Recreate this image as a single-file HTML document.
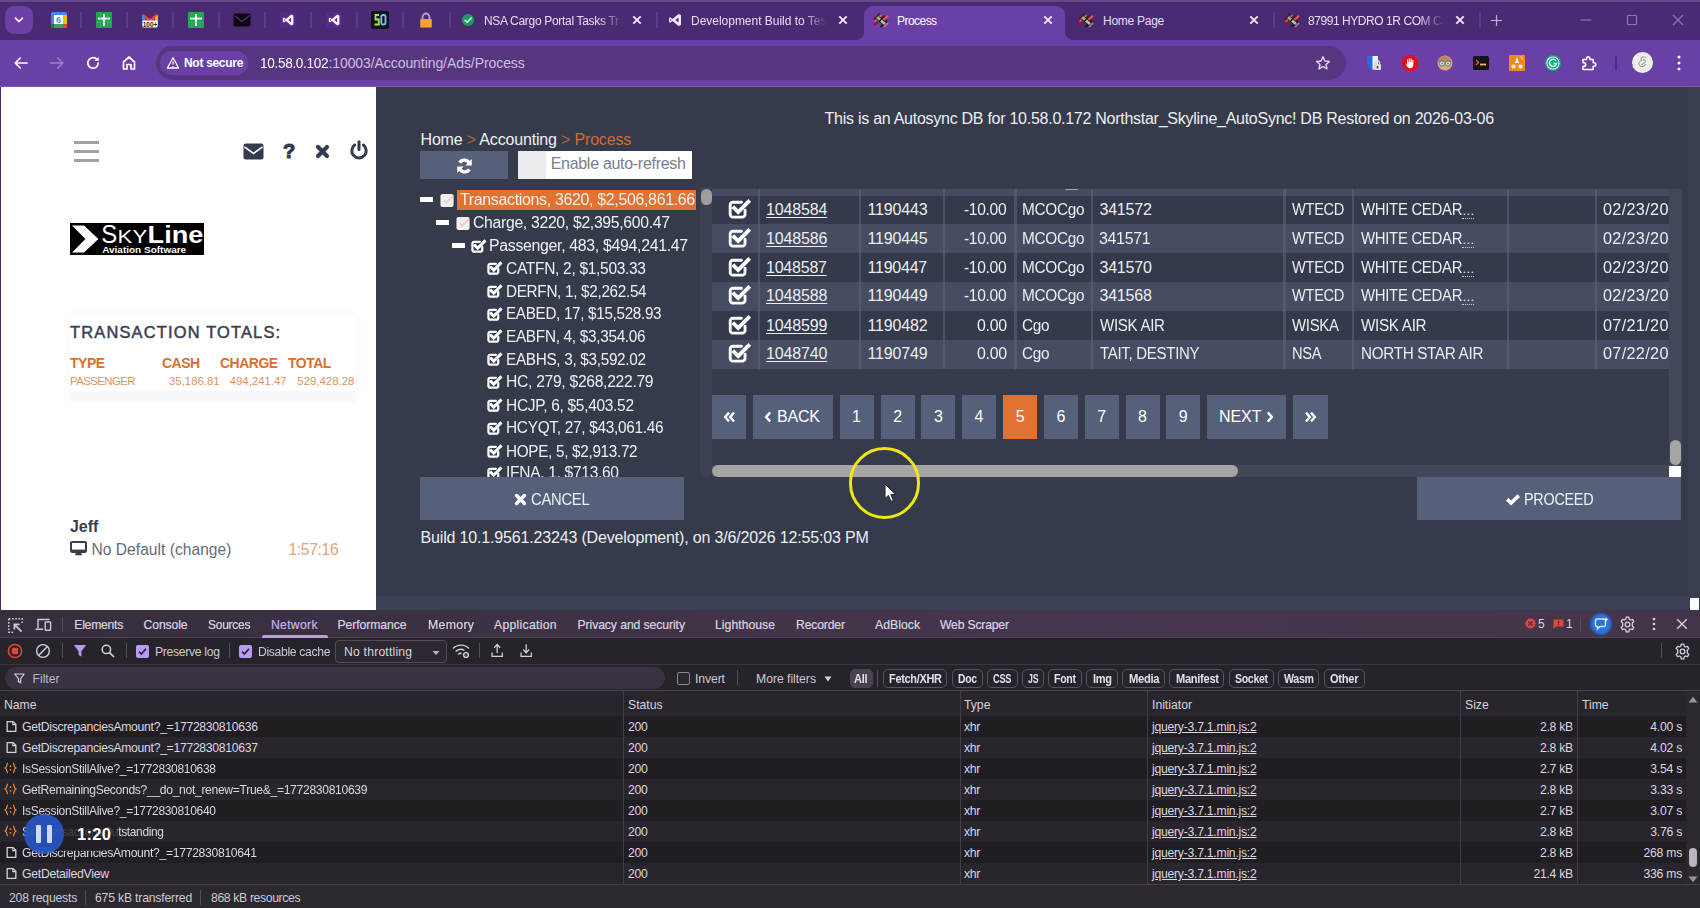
<!DOCTYPE html>
<html lang="en"><head><meta charset="utf-8"><title>Process</title>
<style>
html,body{margin:0;padding:0}
body{width:1700px;height:908px;overflow:hidden;position:relative;background:#363b4c;font-family:"Liberation Sans",sans-serif}
svg{display:block}

#tabstrip{position:absolute;left:0;top:0;width:1700px;height:40px;background:#4a2b73;}
#tabstrip:before{content:"";position:absolute;left:0;top:0;width:1700px;height:2px;background:#6f5590;opacity:.7}
.tsb{position:absolute;left:5px;top:6px;width:28px;height:28px;border-radius:9px;background:#6b3fa3;display:flex;align-items:center;justify-content:center}
.pin{position:absolute;top:11px;width:18px;height:18px}
.tsep{position:absolute;top:12px;width:2px;height:16px;background:#5d3d88;border-radius:1px}
.ttitle{position:absolute;top:13px;height:16px;line-height:16px;font-size:12px;color:#e6dcf3;white-space:nowrap;overflow:hidden}
.fade{-webkit-mask-image:linear-gradient(90deg,#000 82%,transparent 100%);mask-image:linear-gradient(90deg,#000 82%,transparent 100%)}
.tclose{position:absolute;top:15px;width:14px;height:14px}
.tclose svg{display:block}
#acttab{position:absolute;left:864px;top:6px;width:201px;height:34px;background:#6b40a6;border-radius:9px 9px 0 0}
.curveL{position:absolute;left:-9px;bottom:0;width:9px;height:9px;background:radial-gradient(circle at 0 0,transparent 9px,#6b40a6 9.5px)}
.curveR{position:absolute;right:-9px;bottom:0;width:9px;height:9px;background:radial-gradient(circle at 100% 0,transparent 9px,#6b40a6 9.5px)}
.wc{position:absolute;top:14px}
#toolbar{position:absolute;left:0;top:40px;width:1700px;height:47px;background:#6b40a6;border-bottom:0}
#toolbar:after{content:"";position:absolute;left:0;bottom:0;width:1700px;height:1px;background:#7a58b0}
.tb{position:absolute;top:14px}
#omni{position:absolute;left:156px;top:6px;width:1190px;height:34px;border-radius:17px;background:#57367f}
#chip{position:absolute;left:4px;top:5px;width:88px;height:24px;border-radius:12px;background:#6b40a6;color:#fff;font-weight:bold;font-size:12px;letter-spacing:-0.3px;line-height:24px}
#chip span{position:absolute;left:24px;top:0;white-space:nowrap}
#url{position:absolute;left:103.5px;top:8px;height:18px;line-height:18px;font-size:14px;white-space:nowrap}
.ext{position:absolute;top:14px;width:18px;height:18px}

#side{position:absolute;left:0;top:87px;width:376px;height:523px;background:#fff;border-left:1px solid #4b2d72;box-sizing:border-box}
#side > *{margin-left:-1px}
#logo{position:absolute;left:70px;top:135.6px;width:134px;height:32px;color:#fff;overflow:hidden}
#logo span{position:absolute;white-space:nowrap}
#logo .l1{left:31px;top:-4px;font-size:31px;line-height:34px;font-weight:normal;letter-spacing:-1px}
#logo .l2{left:49px;top:0px;font-size:24px;line-height:28px;letter-spacing:-1.5px}
#logo .l3{left:77px;top:-5px;font-size:31px;line-height:34px;font-weight:bold;letter-spacing:-1.4px}
#logo .l4{left:32px;top:21px;font-size:9.6px;line-height:11px;font-weight:bold;letter-spacing:-0.2px}
#totcard{position:absolute;left:70px;top:228px;width:286px;height:85px;border-radius:4px;box-shadow:0 0 9px rgba(60,60,90,.05);background:#fff}
#tt{position:absolute;left:70px;top:235px;font-size:16.4px;line-height:20px;letter-spacing:1.2px;color:#3a3f51;font-weight:normal;white-space:nowrap;-webkit-text-stroke:0.5px #3a3f51}
.th{position:absolute;top:267.5px;font-size:14px;line-height:16px;font-weight:bold;color:#d9702f;white-space:nowrap;letter-spacing:-0.5px}
.td{position:absolute;top:286.5px;font-size:11.4px;line-height:14px;color:#de935f;white-space:nowrap;letter-spacing:0}
#jeff{position:absolute;left:70px;top:429.5px;font-size:15.9px;line-height:20px;font-weight:bold;color:#363b4e}
#nodef{position:absolute;left:91.5px;top:453px;font-size:15.6px;line-height:20px;color:#666b78;white-space:nowrap;letter-spacing:0.02px}
#timer{position:absolute;left:288.4px;top:453px;font-size:15.6px;line-height:20px;color:#e2a178;white-space:nowrap;letter-spacing:-0.3px}

#main{position:absolute;left:376px;top:87px;width:1324px;height:523px;background:#363b4c;overflow:hidden;color:#eff0f3}
.t16{position:absolute;font-size:16px;line-height:20px;white-space:nowrap}
.o{color:#cc6c38}
.o2{color:#b0643c}
#refresh{position:absolute;left:44.4px;top:64px;width:88px;height:28.3px;background:#56607b;display:flex;align-items:center;justify-content:center}
#auto{position:absolute;left:142.3px;top:64px;width:174px;height:28.3px;background:#fff}
#auto .sq{position:absolute;left:0;top:0;width:28px;height:28.3px;background:#ececee}
#auto span{position:absolute;left:32.4px;top:3px;font-size:16px;line-height:20px;color:#7a7e88;white-space:nowrap}
#tree{position:absolute;left:0;top:0;width:324px;height:390.6px;overflow:hidden}
.minus{position:absolute;width:13px;height:4.4px;background:#fff}
.selbg{position:absolute;height:19.6px;background:#e07332}
#treesb{position:absolute;left:324px;top:100px;width:12px;height:290px;background:#3c4153;border-radius:0 0 6px 6px}
#treesb div{position:absolute;left:1px;top:2.4px;width:10.6px;height:16px;border-radius:5.3px;background:#9d9d9c}
#tbl{position:absolute;left:336px;top:102px;width:957px;height:179.6px;overflow:hidden;background:transparent}
.hdrsliver{position:absolute;left:0;top:0;width:957px;height:7px;background:#454c61}
.tr{position:absolute;left:0;width:957px;height:29px}
.c{position:absolute;font-size:16px;line-height:20px;white-space:nowrap;color:#eceef1}
.lnk span{text-decoration:underline;text-underline-offset:2px;text-decoration-thickness:1.2px}
.ell{font-size:13px;letter-spacing:0.4px;border-bottom:1.5px dotted #c8cad2;display:inline-block;line-height:15px}
.vl{position:absolute;top:0;width:2.2px;height:179.6px;background:rgba(98,108,136,.48)}
.pb{position:absolute;top:307.8px;height:44.5px;background:#56607b;display:flex;align-items:center;justify-content:center;font-size:16px;color:#fff}
.pb.act{background:#e07332}
#hsb{position:absolute;left:336px;top:378.4px;width:957px;height:12px;background:#42475a}
#hsb div{position:absolute;left:0;top:0;width:526px;height:12px;border-radius:6px;background:#a5a5a3}
#vsb{position:absolute;left:1292.6px;top:102px;width:13px;height:288px;background:#42475a}
#vsb .th1{position:absolute;left:1px;top:251px;width:11px;height:25px;border-radius:5.5px;background:#a5a5a3}
#vsb .corner{position:absolute;left:0.6px;top:276.5px;width:11.6px;height:11.5px;background:#fff}
.bigbtn{position:absolute;width:264px;height:43px;background:#56607b;display:flex;align-items:center;justify-content:center;font-size:16px}
#pagesb{position:absolute;left:1312px;top:0;width:12px;height:523px;background:#3a3f51}
#pagesb div{position:absolute;left:1.6px;top:511px;width:9.6px;height:12px;background:#fff}
#footerband{position:absolute;left:0;top:509px;width:1324px;height:14px;background:#3b4056}
#ring{position:absolute;left:472.5px;top:360px;width:65.8px;height:65.8px;border-radius:50%;border:3.6px solid #f0e614;box-sizing:content-box}
#cursor{position:absolute;left:507.6px;top:395.6px}

#dt{position:absolute;left:0;top:610px;width:1700px;height:298px;background:#27232a;color:#d8d3de;font-size:12px;overflow:hidden}
#dt:before{content:"";position:absolute;left:0;top:0;width:1700px;height:2px;background:linear-gradient(90deg,#362e3c 0%,#3c3143 25%,#47364f 65%,#433549 100%)}
#dtabs{position:absolute;left:0;top:1px;width:1700px;height:27px;background:linear-gradient(90deg,#362e3c 0%,#3c3143 25%,#47364f 65%,#433549 100%);border-bottom:1px solid #4d4452;box-sizing:border-box}
.dtab{position:absolute;top:6px;height:16px;line-height:16px;font-size:12.2px;color:#dbd5e2;white-space:nowrap;-webkit-text-stroke:0.2px #dbd5e2}
.dtab.on{color:#c7b1f5;-webkit-text-stroke:0.2px #c7b1f5}
#netul{position:absolute;left:262px;top:24px;width:66px;height:3px;background:#b79cf0;border-radius:2px 2px 0 0}
.dsep{position:absolute;width:1px;height:15px;background:#564d5b}
.dcnt{position:absolute;top:5px;font-size:12px;line-height:16px;color:#d8d3de}
#dbar{position:absolute;left:0;top:28px;width:1700px;height:27px;background:#27232a;border-bottom:1px solid #3c3640;box-sizing:border-box}
.dlbl{position:absolute;top:6px;height:16px;line-height:16px;font-size:12.2px;color:#cfc9d6;white-space:nowrap;letter-spacing:-0.1px}
#thr{position:absolute;left:335px;top:1.5px;width:111.5px;height:23.5px;border:1px solid #544c5a;border-radius:4px;box-sizing:border-box;background:#2c2730}
#thr span{position:absolute;left:8px;top:3.5px;line-height:16px;font-size:12.2px;color:#d8d3de;white-space:nowrap}
#dfil{position:absolute;left:0;top:55px;width:1700px;height:27px;background:#27232a;border-bottom:1px solid #3c3640;box-sizing:border-box}
#fbox{position:absolute;left:5px;top:2px;width:660px;height:22px;border-radius:11px;background:#3a3240}
#fbox span{position:absolute;left:27.5px;top:3.5px;line-height:16px;font-size:12.2px;color:#bfb8c6}
.pill{position:absolute;top:3.5px;height:19.5px;border:1px solid #5a5260;border-radius:5px;box-sizing:border-box}
.pilt{position:absolute;top:5.5px;height:16px;line-height:16px;font-size:12px;font-weight:bold;color:#e4dfe9;white-space:nowrap}
.pill.on{background:#4b4251;border-color:#4b4251}
#ghead{position:absolute;left:0;top:80px;width:1700px;height:26.6px;background:#29252c;border-top:1px solid #48424d;border-bottom:1px solid #403b45;box-sizing:border-box}
.gh{position:absolute;top:5.5px;line-height:16px;font-size:12.2px;color:#d8d3de}
.gr{position:absolute;left:0;width:1686px;height:21px}
.gc{position:absolute;top:3px;line-height:16px;font-size:12.2px;color:#dcd7e1;white-space:nowrap;letter-spacing:-0.25px}
.gc span{letter-spacing:0}
.gc.u{text-decoration:underline}
.gc.rt{text-align:right}
.gvl{position:absolute;top:81px;width:1px;height:193px;background:#433d48}
#dsb{position:absolute;left:1686px;top:82px;width:14px;height:192px;background:#2c2830}
#dsb .t{position:absolute;left:3px;top:156px;width:8px;height:19px;border-radius:4px;background:#b9b4bd}
#dstat{position:absolute;left:0;top:274px;width:1700px;height:24px;background:#2c2830;border-top:1px solid #4a434f;box-sizing:border-box}
#rec{position:absolute;left:0;top:0}
#rec .pill2{position:absolute;left:26px;top:207px;width:92px;height:34px;border-radius:17px;background:rgba(34,30,38,.82)}
#rec .pz{position:absolute;left:24px;top:204px;width:40px;height:40px;border-radius:50%;background:rgba(40,92,220,.80)}
#rec .pz i{position:absolute;top:11px;width:5px;height:18px;background:rgba(225,234,255,.9);border-radius:1px}
#rec .pz i:first-child{left:12px}
#rec .pz i:last-child{left:23px}
#rec span{position:absolute;left:77px;top:213px;font-size:16.5px;line-height:22px;font-weight:bold;color:#fff;letter-spacing:0.3px}

</style></head><body>
<div id="tabstrip">
<div class="tsb"><svg width="12" height="12" viewBox="0 0 12 12"><path d="M2.5 4.2 L6 7.6 L9.5 4.2" fill="none" stroke="#fff" stroke-width="1.7" stroke-linecap="round" stroke-linejoin="round"/></svg></div>
<div class="pin" style="left:50px"><svg width="18" height="18" viewBox="0 0 18 18"><rect x="1" y="1" width="16" height="16" rx="2" fill="#4285f4"/><rect x="13" y="4" width="4" height="10" fill="#fbbc04"/><rect x="4" y="13" width="10" height="4" fill="#34a853"/><rect x="1" y="13" width="3" height="4" fill="#188038"/><rect x="13" y="13" width="4" height="4" fill="#ea4335"/><rect x="4" y="4" width="9" height="9" fill="#fff"/><text x="8.5" y="12" font-family="Liberation Sans, sans-serif" font-size="9" font-weight="bold" fill="#4285f4" text-anchor="middle">6</text></svg></div>
<div class="pin" style="left:95px"><svg width="18" height="18" viewBox="0 0 18 18"><rect x="1" y="1" width="16" height="16" rx="1" fill="#23a455"/><rect x="8" y="3" width="1.9" height="12" fill="#fff"/><rect x="3" y="6.6" width="12" height="1.9" fill="#fff"/><path d="M1 11.5 H17 M5 1 V17 M13 1 V17" stroke="#3fb56c" stroke-width="0.6"/></svg></div>
<div class="tsep" style="left:80px"></div>
<div class="pin" style="left:141px"><svg width="18" height="18" viewBox="0 0 18 18"><path d="M1 4 L1 15 L4 15 L4 8 L9 11.5 L14 8 L14 15 L17 15 L17 4 L15.5 3 L9 7.8 L2.5 3 Z" fill="#ea4335"/><path d="M1 4 L1 15 L4 15 L4 6.2Z" fill="#4285f4"/><path d="M17 4 L17 15 L14 15 L14 6.2Z" fill="#fbbc04"/><rect x="1.5" y="9.5" width="15" height="7" rx="1" fill="#fff"/><text x="9" y="15.5" font-family="Liberation Sans, sans-serif" font-size="6.5" font-weight="bold" fill="#222" text-anchor="middle">100+</text></svg></div>
<div class="tsep" style="left:126px"></div>
<div class="pin" style="left:187px"><svg width="18" height="18" viewBox="0 0 18 18"><rect x="1" y="1" width="16" height="16" rx="1" fill="#23a455"/><rect x="8" y="3" width="1.9" height="12" fill="#fff"/><rect x="3" y="6.6" width="12" height="1.9" fill="#fff"/><path d="M1 11.5 H17 M5 1 V17 M13 1 V17" stroke="#3fb56c" stroke-width="0.6"/></svg></div>
<div class="tsep" style="left:172px"></div>
<div class="pin" style="left:233px"><svg width="18" height="18" viewBox="0 0 18 18"><rect x="0.5" y="2.5" width="17" height="13" rx="1.5" fill="#0b0710"/><path d="M1.5 4.5 L9 10.5 L16.5 4.5" fill="none" stroke="#4a2c72" stroke-width="1.6"/></svg></div>
<div class="tsep" style="left:218px"></div>
<div class="pin" style="left:279px"><svg width="18" height="18" viewBox="0 0 18 18"><rect x="1" y="1" width="16" height="16" rx="2" fill="#5e2a96" opacity="0.75"/><path d="M12.2 3.6 L14.4 4.6 L14.4 13.4 L12.2 14.4 L6.9 9.9 L5 11.5 L3.8 10.8 L3.8 7.2 L5 6.5 L6.9 8.1 Z M12.1 6.7 L9.3 9 L12.1 11.3 Z M5 7.9 L5 10.1 L6.1 9 Z" fill="#fbf3ff" fill-rule="evenodd"/></svg></div>
<div class="tsep" style="left:264px"></div>
<div class="pin" style="left:325px"><svg width="18" height="18" viewBox="0 0 18 18"><rect x="1" y="1" width="16" height="16" rx="2" fill="#5e2a96" opacity="0.75"/><path d="M12.2 3.6 L14.4 4.6 L14.4 13.4 L12.2 14.4 L6.9 9.9 L5 11.5 L3.8 10.8 L3.8 7.2 L5 6.5 L6.9 8.1 Z M12.1 6.7 L9.3 9 L12.1 11.3 Z M5 7.9 L5 10.1 L6.1 9 Z" fill="#fbf3ff" fill-rule="evenodd"/></svg></div>
<div class="tsep" style="left:310px"></div>
<div class="pin" style="left:371px"><svg width="18" height="18" viewBox="0 0 18 18"><rect x="0" y="0" width="18" height="18" rx="2" fill="#10141c"/><path d="M8 4 L4.5 4 L4.5 8.5 L7.8 8.5 L7.8 13.5 L3.5 13.5" fill="none" stroke="#b5e04a" stroke-width="1.8"/><rect x="10.3" y="4" width="4.2" height="9.5" rx="1.5" fill="none" stroke="#6ec6e8" stroke-width="1.8"/></svg></div>
<div class="tsep" style="left:356px"></div>
<div class="pin" style="left:417px"><svg width="18" height="18" viewBox="0 0 18 18"><path d="M5.5 8 L5.5 6 A3.5 3.5 0 0 1 12.5 6 L12.5 8" fill="none" stroke="#b3a1dc" stroke-width="1.8"/><rect x="3.2" y="8" width="11.6" height="8.6" rx="0.8" fill="#f9a22b"/></svg></div>
<div class="tsep" style="left:402px"></div>
<div class="tsep" style="left:449px"></div>
<div class="pin" style="left:459px"><svg width="18" height="18" viewBox="0 0 18 18"><circle cx="9" cy="9" r="6.1" fill="#1f9a62"/><path d="M6 9.2 L8.2 11.3 L12.2 7" fill="none" stroke="#d8f5e6" stroke-width="1.6" stroke-linecap="round" stroke-linejoin="round"/></svg></div>
<div class="ttitle fade" style="left:484px;width:140px;letter-spacing:-0.31px">NSA Cargo Portal Tasks Tr</div>
<div class="tclose" style="left:632px"><svg width="10" height="10" viewBox="0 0 10 10"><path d="M1.3 1.3 L8.7 8.7 M8.7 1.3 L1.3 8.7" stroke="#efe8f8" stroke-width="1.9" fill="none"/></svg></div>
<div class="tsep" style="left:656px"></div>
<div class="pin" style="left:666px"><svg width="18" height="18" viewBox="0 0 18 18"><path d="M12.6 3 L15 4 L15 14 L12.6 15 L6.5 9.9 L4.3 11.7 L3 11 L3 7 L4.3 6.3 L6.5 8.1 Z M12.5 6.4 L9.2 9 L12.5 11.6 Z M4.3 7.8 L4.3 10.2 L5.6 9 Z" fill="#f4eaff" fill-rule="evenodd"/></svg></div>
<div class="ttitle fade" style="left:691px;width:136px;letter-spacing:-0.02px">Development Build to Tes</div>
<div class="tclose" style="left:838px"><svg width="10" height="10" viewBox="0 0 10 10"><path d="M1.3 1.3 L8.7 8.7 M8.7 1.3 L1.3 8.7" stroke="#efe8f8" stroke-width="1.9" fill="none"/></svg></div>
<div id="acttab"><div class="curveL"></div><div class="curveR"></div></div>
<div class="pin" style="left:872px"><svg width="18" height="18" viewBox="0 0 18 18"><g stroke-linecap="butt" fill="none"><path d="M2 8.5 L8 2.5" stroke="#5e1038" stroke-width="2"/><path d="M2.5 11 L9.5 4" stroke="#e2584c" stroke-width="1.8"/><path d="M2.5 14 L6 10.5" stroke="#8c1436" stroke-width="2.4"/><path d="M8.5 9 L13 4.5" stroke="#5a0c34" stroke-width="2.2"/><path d="M10.5 9.5 L16 4.8" stroke="#ee5a4a" stroke-width="2"/><path d="M8.5 16 L15 9.5" stroke="#3c0a3a" stroke-width="2"/><path d="M12 16 L16 12" stroke="#c27a80" stroke-width="1.6"/><path d="M5.5 6.5 L13.2 13.2" stroke="#1c1414" stroke-width="4.2"/><path d="M5.2 6.2 L8 8.6" stroke="#7cc47e" stroke-width="3"/><path d="M9 9.6 L13 13" stroke="#a4c890" stroke-width="2.8"/></g></svg></div>
<div class="ttitle" style="left:897px;color:#fff;letter-spacing:-0.54px">Process</div>
<div class="tclose" style="left:1043px"><svg width="10" height="10" viewBox="0 0 10 10"><path d="M1.3 1.3 L8.7 8.7 M8.7 1.3 L1.3 8.7" stroke="#efe8f8" stroke-width="1.9" fill="none"/></svg></div>
<div class="pin" style="left:1077px"><svg width="18" height="18" viewBox="0 0 18 18"><g stroke-linecap="butt" fill="none"><path d="M2 8.5 L8 2.5" stroke="#5e1038" stroke-width="2"/><path d="M2.5 11 L9.5 4" stroke="#e2584c" stroke-width="1.8"/><path d="M2.5 14 L6 10.5" stroke="#8c1436" stroke-width="2.4"/><path d="M8.5 9 L13 4.5" stroke="#5a0c34" stroke-width="2.2"/><path d="M10.5 9.5 L16 4.8" stroke="#ee5a4a" stroke-width="2"/><path d="M8.5 16 L15 9.5" stroke="#3c0a3a" stroke-width="2"/><path d="M12 16 L16 12" stroke="#c27a80" stroke-width="1.6"/><path d="M5.5 6.5 L13.2 13.2" stroke="#1c1414" stroke-width="4.2"/><path d="M5.2 6.2 L8 8.6" stroke="#7cc47e" stroke-width="3"/><path d="M9 9.6 L13 13" stroke="#a4c890" stroke-width="2.8"/></g></svg></div>
<div class="ttitle" style="left:1103px;letter-spacing:-0.26px">Home Page</div>
<div class="tclose" style="left:1249px"><svg width="10" height="10" viewBox="0 0 10 10"><path d="M1.3 1.3 L8.7 8.7 M8.7 1.3 L1.3 8.7" stroke="#efe8f8" stroke-width="1.9" fill="none"/></svg></div>
<div class="tsep" style="left:1273px"></div>
<div class="pin" style="left:1283px"><svg width="18" height="18" viewBox="0 0 18 18"><g stroke-linecap="butt" fill="none"><path d="M2 8.5 L8 2.5" stroke="#5e1038" stroke-width="2"/><path d="M2.5 11 L9.5 4" stroke="#e2584c" stroke-width="1.8"/><path d="M2.5 14 L6 10.5" stroke="#8c1436" stroke-width="2.4"/><path d="M8.5 9 L13 4.5" stroke="#5a0c34" stroke-width="2.2"/><path d="M10.5 9.5 L16 4.8" stroke="#ee5a4a" stroke-width="2"/><path d="M8.5 16 L15 9.5" stroke="#3c0a3a" stroke-width="2"/><path d="M12 16 L16 12" stroke="#c27a80" stroke-width="1.6"/><path d="M5.5 6.5 L13.2 13.2" stroke="#1c1414" stroke-width="4.2"/><path d="M5.2 6.2 L8 8.6" stroke="#7cc47e" stroke-width="3"/><path d="M9 9.6 L13 13" stroke="#a4c890" stroke-width="2.8"/></g></svg></div>
<div class="ttitle fade" style="left:1308px;width:136px;letter-spacing:-0.44px">87991 HYDRO 1R COM CA</div>
<div class="tclose" style="left:1455px"><svg width="10" height="10" viewBox="0 0 10 10"><path d="M1.3 1.3 L8.7 8.7 M8.7 1.3 L1.3 8.7" stroke="#efe8f8" stroke-width="1.9" fill="none"/></svg></div>
<div class="tsep" style="left:1479px"></div>
<div class="tclose" style="left:1490px;top:13.5px"><svg width="13" height="13" viewBox="0 0 13 13"><path d="M6.5 1 V12 M1 6.5 H12" stroke="#bfaedb" stroke-width="1.2" fill="none"/></svg></div>
<svg class="wc" style="left:1580px" width="12" height="12" viewBox="0 0 12 12"><path d="M0.5 6 H11.5" stroke="#8c75b3" stroke-width="1.2"/></svg>
<svg class="wc" style="left:1626px" width="12" height="12" viewBox="0 0 12 12"><rect x="1.5" y="1.5" width="9" height="9" rx="1" fill="none" stroke="#8c75b3" stroke-width="1.2"/></svg>
<svg class="wc" style="left:1672px" width="12" height="12" viewBox="0 0 12 12"><path d="M1 1 L11 11 M11 1 L1 11" stroke="#8c75b3" stroke-width="1.2"/></svg>
</div>
<div id="toolbar">
<svg class="tb" style="left:12px" width="18" height="18" viewBox="0 0 18 18"><path d="M15 9 H3.5 M8.2 4 L3.2 9 L8.2 14" fill="none" stroke="#fff" stroke-width="1.7" stroke-linecap="round" stroke-linejoin="round"/></svg>
<svg class="tb" style="left:48px" width="18" height="18" viewBox="0 0 18 18"><path d="M3 9 H14.5 M9.8 4 L14.8 9 L9.8 14" fill="none" stroke="#9a7fcb" stroke-width="1.7" stroke-linecap="round" stroke-linejoin="round"/></svg>
<svg class="tb" style="left:84px" width="18" height="18" viewBox="0 0 18 18"><path d="M14.2 9 A5.2 5.2 0 1 1 12.4 5.0" fill="none" stroke="#fff" stroke-width="1.7" stroke-linecap="round"/><path d="M14.6 2.8 V7 H10.4 Z" fill="#fff"/></svg>
<svg class="tb" style="left:120px" width="18" height="18" viewBox="0 0 18 18"><path d="M3.5 8 L9 3 L14.5 8 V15 H11 V10.5 H7 V15 H3.5 Z" fill="none" stroke="#fff" stroke-width="1.7" stroke-linejoin="round"/></svg>
<div id="omni"><div id="chip"><svg width="14" height="14" viewBox="0 0 14 14" style="position:absolute;left:5.5px;top:5px"><path d="M7 1.8 L12.6 12 H1.4 Z" fill="none" stroke="#fff" stroke-width="1.3" stroke-linejoin="round"/><path d="M7 5.5 V8.6 M7 10 V11" stroke="#fff" stroke-width="1.2"/></svg><span>Not secure</span></div>
<div id="url"><span id="f_host" style="position:absolute;left:0;top:0;color:#fff;letter-spacing:-0.320px;display:inline-block;transform-origin:0 50%;transform:scaleX(0.9694);">10.58.0.102</span><span id="f_path" style="position:absolute;left:68.9px;top:0;color:#cdbfe3;letter-spacing:-0.074px;">:10003/Accounting/Ads/Process</span></div>
<svg style="position:absolute;left:1159px;top:9px" width="16" height="16" viewBox="0 0 16 16"><path d="M8 1.8 L9.9 6 L14.4 6.4 L11 9.4 L12 13.9 L8 11.5 L4 13.9 L5 9.4 L1.6 6.4 L6.1 6 Z" fill="none" stroke="#e6dcf5" stroke-width="1.4" stroke-linejoin="round"/></svg>
</div>
<div class="ext" style="left:1365px"><svg width="18" height="18" viewBox="0 0 18 18"><path d="M2 2 H13 V9 C13 13 8 16 7.5 16 C7 16 2 13 2 9 Z" fill="#2a6bd8"/><path d="M7.5 2 H13 V9 C13 13 8 16 7.5 16 Z" fill="#e8f0fe"/><rect x="9" y="10" width="7" height="6" rx="1" fill="#ddd"/><path d="M10.5 10 V8.6 A2 2 0 0 1 14.5 8.6 V10" stroke="#ddd" stroke-width="1.3" fill="none"/><rect x="11.7" y="12" width="1.6" height="2.2" fill="#444"/></svg></div>
<div class="ext" style="left:1401px"><svg width="18" height="18" viewBox="0 0 18 18"><path d="M5.6 1 H12.4 L17 5.6 V12.4 L12.4 17 H5.6 L1 12.4 V5.6 Z" fill="#e0101a"/><path d="M6 9 V5.5 H7.2 V8 H7.8 V4.3 H9 V8 H9.6 V4.8 H10.8 V8.3 H11.3 V6 H12.4 V10.5 C12.4 13 11 14.3 9 14.3 C7 14.3 6.3 13 5 10.5 L5.8 10 Z" fill="#fff"/></svg></div>
<div class="ext" style="left:1436px"><svg width="18" height="18" viewBox="0 0 18 18"><circle cx="9" cy="9" r="7.5" fill="#d9a87a"/><path d="M1.6 8 A7.5 7.5 0 0 1 16.4 8 Z" fill="#b98a5e"/><circle cx="6" cy="9.5" r="2.6" fill="#e8e3d8" stroke="#5a6b78" stroke-width="0.9"/><circle cx="12" cy="9.5" r="2.6" fill="#e8e3d8" stroke="#5a6b78" stroke-width="0.9"/><circle cx="6" cy="9.5" r="1" fill="#6d8a5b"/><circle cx="12" cy="9.5" r="1" fill="#6d8a5b"/></svg></div>
<div class="ext" style="left:1472px"><svg width="18" height="18" viewBox="0 0 18 18"><rect x="1" y="2" width="16" height="14" rx="1.5" fill="#15121a"/><path d="M4 6 L6.5 8.5 L4 11" stroke="#e25b3b" stroke-width="1.4" fill="none"/><rect x="8" y="9.6" width="6" height="1.8" fill="#f2b84b"/></svg></div>
<div class="ext" style="left:1508px"><svg width="18" height="18" viewBox="0 0 18 18"><rect x="1" y="1" width="16" height="16" rx="1" fill="#f08a1c"/><path d="M9 3 L11 9 H7 Z" fill="#fff"/><circle cx="5.5" cy="12.5" r="2" fill="#fff"/><circle cx="12.5" cy="12.5" r="2" fill="#fff"/><path d="M12 2 L16 8 L14 3 Z" fill="#ffd9a8"/></svg></div>
<div class="ext" style="left:1544px"><svg width="18" height="18" viewBox="0 0 18 18"><circle cx="9" cy="9" r="8" fill="#11a683"/><circle cx="9" cy="9" r="6.6" fill="#fff"/><circle cx="9" cy="9" r="5.7" fill="#11a683"/><path d="M12.2 7 A3.6 3.6 0 1 0 12.6 9.4 H9.6" stroke="#fff" stroke-width="1.5" fill="none"/></svg></div>
<div class="ext" style="left:1580px"><svg width="18" height="18" viewBox="0 0 18 18"><path d="M3 5.5 H6.5 V4.6 A1.7 1.7 0 0 1 9.9 4.6 V5.5 H13.2 V8.8 H14.1 A1.7 1.7 0 0 1 14.1 12.2 H13.2 V15.5 H3 V12.4 H3.9 A1.8 1.8 0 0 0 3.9 8.8 H3 Z" fill="none" stroke="#fff" stroke-width="1.6" stroke-linejoin="round"/></svg></div>
<div style="position:absolute;left:1615px;top:15px;width:2px;height:16px;background:#4f2f86;border-radius:1px"></div>
<div style="position:absolute;left:1632px;top:12px;width:21px;height:21px;border-radius:50%;background:#f0eeec"><svg width="21" height="21" viewBox="0 0 21 21"><path d="M13.5 5.5 C11 4 8 6 9.5 8.5 C6 9 6 14 9.5 14.5 C12 15 13 13 13.5 12 M11 8 C13 7.5 14.5 9 13 10.5 C12 11.5 10 11 10 13" stroke="#7a8f7a" stroke-width="1" fill="none"/></svg></div>
<svg style="position:absolute;left:1676px;top:14px" width="6" height="18" viewBox="0 0 6 18"><circle cx="3" cy="3" r="1.5" fill="#fff"/><circle cx="3" cy="9" r="1.5" fill="#fff"/><circle cx="3" cy="15" r="1.5" fill="#fff"/></svg>
</div>
<div id="side">
<div style="position:absolute;left:74px;top:54px;width:25px;height:3.4px;background:#9fa0a9"></div>
<div style="position:absolute;left:74px;top:63px;width:25px;height:3.4px;background:#9fa0a9"></div>
<div style="position:absolute;left:74px;top:72px;width:25px;height:3.4px;background:#9fa0a9"></div>
<svg style="position:absolute;left:243px;top:56px" width="21" height="17" viewBox="0 0 22 18" preserveAspectRatio="none"><rect x="0.5" y="0.5" width="21" height="17" rx="2.5" fill="#363b4e"/><path d="M1.5 4.2 L11 11 L20.5 4.2" fill="none" stroke="#fff" stroke-width="1.7"/></svg>
<div style="position:absolute;left:281px;top:53px;width:16px;text-align:center;font-weight:bold;font-size:20px;line-height:22px;color:#363b4e;-webkit-text-stroke:1.1px #363b4e">?</div>
<svg style="position:absolute;left:315px;top:57px" width="15" height="15" viewBox="0 0 15 15"><path d="M3 3 L12 12 M12 3 L3 12" stroke="#363b4e" stroke-width="4.2" stroke-linecap="round"/></svg>
<svg style="position:absolute;left:349px;top:53px" width="20" height="20" viewBox="0 0 20 20"><path d="M5.6 5 A7.2 7.2 0 1 0 14.4 5" fill="none" stroke="#363b4e" stroke-width="3" stroke-linecap="round"/><path d="M10 1.8 V9.4" stroke="#363b4e" stroke-width="3" stroke-linecap="round"/></svg>
<div id="logo"><svg width="134" height="32" viewBox="0 0 134 32" style="position:absolute;left:0;top:0"><rect width="134" height="32" fill="#000"/><path d="M2 2.6 L14 2.6 L28.4 16 L14 29.4 L2 29.4 L15.4 16 Z" fill="#fff"/><g fill="#fff" font-family="Liberation Sans, sans-serif"><text x="31.2" y="20.1" font-size="25.5" textLength="16" lengthAdjust="spacingAndGlyphs">S</text><text x="47.6" y="20.1" font-size="18" textLength="29.6" lengthAdjust="spacingAndGlyphs">KY</text><text x="77.6" y="20.1" font-size="24" font-weight="bold" textLength="55.8" lengthAdjust="spacingAndGlyphs">Line</text><text x="32.2" y="29.6" font-size="8.2" font-weight="bold" textLength="84" lengthAdjust="spacingAndGlyphs">Aviation Software</text></g></svg></div>
<div id="totcard"></div><div style="position:absolute;left:70px;top:303.5px;width:286px;height:10px;background:#f8f8fa;border-radius:0 0 4px 4px"></div>
<div id="tt">TRANSACTION TOTALS:</div>
<div class="th" style="left:70px">TYPE</div><div class="th" style="left:162px">CASH</div><div class="th" style="left:220px">CHARGE</div><div class="th" style="left:288px">TOTAL</div>
<div class="td" style="left:70px;letter-spacing:-0.57px">PASSENGER</div><div class="td" style="left:169px">35,186.81</div><div class="td" style="left:229.7px">494,241.47</div><div class="td" style="left:297.3px">529,428.28</div>
<div id="jeff">Jeff</div>
<svg style="position:absolute;left:70px;top:454px" width="17" height="15" viewBox="0 0 17 15"><rect x="1" y="1" width="15" height="10" rx="1.2" fill="none" stroke="#363b4e" stroke-width="2"/><rect x="1" y="8.6" width="15" height="2.4" fill="#363b4e"/><path d="M5 14.2 H12 L11 11 H6 Z" fill="#363b4e"/></svg>
<div id="nodef">No Default (change)</div>
<div id="timer">1:57:16</div>
</div>
<div id="main">
<div id="f_notice" class="t16" style="left:448.6px;top:22.0px;letter-spacing:-0.266px;color:#eceef1">This is an Autosync DB for 10.58.0.172 Northstar_Skyline_AutoSync! DB Restored on 2026-03-06</div>
<div id="f_crumb" class="t16" style="left:44.5px;top:42.5px;letter-spacing:-0.174px;">Home <span class="o2">&gt;</span> Accounting <span class="o2">&gt;</span><span class="o"> Process</span></div>
<div id="refresh"><svg width="17" height="16" viewBox="0 0 17 16" style="margin-top:1px"><path d="M13.8 6.4 A5.7 5.7 0 0 0 3.6 4.6 M3.2 9.6 A5.7 5.7 0 0 0 13.4 11.4" fill="none" stroke="#fff" stroke-width="3.3"/><path d="M15.8 1 V7.4 H9.4 Z M1.2 15 V8.6 H7.6 Z" fill="#fff"/></svg></div>
<div id="auto"><div class="sq"></div><span id="f_auto" style="letter-spacing:-0.296px;">Enable auto-refresh</span></div>
<div id="tree">
<div class="minus" style="left:43.6px;top:110.2px"></div>
<div style="position:absolute;left:63.5px;top:105.8px"><svg width="14.5" height="14.5" viewBox="0 0 16 16" style="display:block"><rect x="0.5" y="1" width="14.5" height="14.5" rx="2.4" fill="#f3f0ef"/><path d="M4.2 8 L7 10.8 L14 3.4" fill="none" stroke="#e6d3cb" stroke-width="2.2"/></svg></div>
<div class="selbg" style="left:81.2px;top:103.3px;width:239.0px"></div>
<div id="f_tree0" class="t16" style="left:83.8px;top:103.1px;letter-spacing:-0.320px;display:inline-block;transform-origin:0 50%;transform:scaleX(0.9947);">Transactions, 3620, $2,506,861.66</div>
<div class="minus" style="left:59.6px;top:133.2px"></div>
<div style="position:absolute;left:79.5px;top:128.8px"><svg width="14.5" height="14.5" viewBox="0 0 16 16" style="display:block"><rect x="0.5" y="1" width="14.5" height="14.5" rx="2.4" fill="#f3f0ef"/><path d="M4.2 8 L7 10.8 L14 3.4" fill="none" stroke="#e6d3cb" stroke-width="2.2"/></svg></div>
<div id="f_tree1" class="t16" style="left:97.0px;top:126.1px;letter-spacing:-0.320px;display:inline-block;transform-origin:0 50%;transform:scaleX(0.9857);">Charge, 3220, $2,395,600.47</div>
<div class="minus" style="left:75.6px;top:156.2px"></div>
<div style="position:absolute;left:94.9px;top:151.6px"><svg width="14.5" height="14.5" viewBox="0 0 16 16" style="display:block;overflow:visible"><path d="M12.4 8.8 V12 A1.9 1.9 0 0 1 10.5 13.9 H3.5 A1.9 1.9 0 0 1 1.6 12 V5 A1.9 1.9 0 0 1 3.5 3.1 H9.8" fill="none" stroke="#fff" stroke-width="2.5" stroke-linecap="round"/><path d="M4.5 7.3 L7.4 10.2 L14.8 2.7" fill="none" stroke="#fff" stroke-width="3.3" stroke-linecap="square" stroke-linejoin="miter"/></svg></div>
<div id="f_tree2" class="t16" style="left:113.3px;top:149.1px;letter-spacing:-0.320px;display:inline-block;transform-origin:0 50%;transform:scaleX(0.9918);">Passenger, 483, $494,241.47</div>
<div style="position:absolute;left:110.9px;top:174.2px"><svg width="14.5" height="14.5" viewBox="0 0 16 16" style="display:block;overflow:visible"><path d="M12.4 8.8 V12 A1.9 1.9 0 0 1 10.5 13.9 H3.5 A1.9 1.9 0 0 1 1.6 12 V5 A1.9 1.9 0 0 1 3.5 3.1 H9.8" fill="none" stroke="#fff" stroke-width="2.5" stroke-linecap="round"/><path d="M4.5 7.3 L7.4 10.2 L14.8 2.7" fill="none" stroke="#fff" stroke-width="3.3" stroke-linecap="square" stroke-linejoin="miter"/></svg></div>
<div id="f_tree3" class="t16" style="left:129.6px;top:171.7px;letter-spacing:-0.320px;display:inline-block;transform-origin:0 50%;transform:scaleX(0.9706);">CATFN, 2, $1,503.33</div>
<div style="position:absolute;left:110.9px;top:197.2px"><svg width="14.5" height="14.5" viewBox="0 0 16 16" style="display:block;overflow:visible"><path d="M12.4 8.8 V12 A1.9 1.9 0 0 1 10.5 13.9 H3.5 A1.9 1.9 0 0 1 1.6 12 V5 A1.9 1.9 0 0 1 3.5 3.1 H9.8" fill="none" stroke="#fff" stroke-width="2.5" stroke-linecap="round"/><path d="M4.5 7.3 L7.4 10.2 L14.8 2.7" fill="none" stroke="#fff" stroke-width="3.3" stroke-linecap="square" stroke-linejoin="miter"/></svg></div>
<div id="f_tree4" class="t16" style="left:130.0px;top:194.7px;letter-spacing:-0.320px;display:inline-block;transform-origin:0 50%;transform:scaleX(0.9551);">DERFN, 1, $2,262.54</div>
<div style="position:absolute;left:110.9px;top:219.7px"><svg width="14.5" height="14.5" viewBox="0 0 16 16" style="display:block;overflow:visible"><path d="M12.4 8.8 V12 A1.9 1.9 0 0 1 10.5 13.9 H3.5 A1.9 1.9 0 0 1 1.6 12 V5 A1.9 1.9 0 0 1 3.5 3.1 H9.8" fill="none" stroke="#fff" stroke-width="2.5" stroke-linecap="round"/><path d="M4.5 7.3 L7.4 10.2 L14.8 2.7" fill="none" stroke="#fff" stroke-width="3.3" stroke-linecap="square" stroke-linejoin="miter"/></svg></div>
<div id="f_tree5" class="t16" style="left:130.0px;top:217.2px;letter-spacing:-0.320px;display:inline-block;transform-origin:0 50%;transform:scaleX(0.9516);">EABED, 17, $15,528.93</div>
<div style="position:absolute;left:110.9px;top:242.1px"><svg width="14.5" height="14.5" viewBox="0 0 16 16" style="display:block;overflow:visible"><path d="M12.4 8.8 V12 A1.9 1.9 0 0 1 10.5 13.9 H3.5 A1.9 1.9 0 0 1 1.6 12 V5 A1.9 1.9 0 0 1 3.5 3.1 H9.8" fill="none" stroke="#fff" stroke-width="2.5" stroke-linecap="round"/><path d="M4.5 7.3 L7.4 10.2 L14.8 2.7" fill="none" stroke="#fff" stroke-width="3.3" stroke-linecap="square" stroke-linejoin="miter"/></svg></div>
<div id="f_tree6" class="t16" style="left:130.0px;top:239.6px;letter-spacing:-0.320px;display:inline-block;transform-origin:0 50%;transform:scaleX(0.9598);">EABFN, 4, $3,354.06</div>
<div style="position:absolute;left:110.9px;top:265.2px"><svg width="14.5" height="14.5" viewBox="0 0 16 16" style="display:block;overflow:visible"><path d="M12.4 8.8 V12 A1.9 1.9 0 0 1 10.5 13.9 H3.5 A1.9 1.9 0 0 1 1.6 12 V5 A1.9 1.9 0 0 1 3.5 3.1 H9.8" fill="none" stroke="#fff" stroke-width="2.5" stroke-linecap="round"/><path d="M4.5 7.3 L7.4 10.2 L14.8 2.7" fill="none" stroke="#fff" stroke-width="3.3" stroke-linecap="square" stroke-linejoin="miter"/></svg></div>
<div id="f_tree7" class="t16" style="left:130.0px;top:262.7px;letter-spacing:-0.320px;display:inline-block;transform-origin:0 50%;transform:scaleX(0.9566);">EABHS, 3, $3,592.02</div>
<div style="position:absolute;left:110.9px;top:287.9px"><svg width="14.5" height="14.5" viewBox="0 0 16 16" style="display:block;overflow:visible"><path d="M12.4 8.8 V12 A1.9 1.9 0 0 1 10.5 13.9 H3.5 A1.9 1.9 0 0 1 1.6 12 V5 A1.9 1.9 0 0 1 3.5 3.1 H9.8" fill="none" stroke="#fff" stroke-width="2.5" stroke-linecap="round"/><path d="M4.5 7.3 L7.4 10.2 L14.8 2.7" fill="none" stroke="#fff" stroke-width="3.3" stroke-linecap="square" stroke-linejoin="miter"/></svg></div>
<div id="f_tree8" class="t16" style="left:130.0px;top:285.4px;letter-spacing:-0.320px;display:inline-block;transform-origin:0 50%;transform:scaleX(0.9808);">HC, 279, $268,222.79</div>
<div style="position:absolute;left:110.9px;top:311.1px"><svg width="14.5" height="14.5" viewBox="0 0 16 16" style="display:block;overflow:visible"><path d="M12.4 8.8 V12 A1.9 1.9 0 0 1 10.5 13.9 H3.5 A1.9 1.9 0 0 1 1.6 12 V5 A1.9 1.9 0 0 1 3.5 3.1 H9.8" fill="none" stroke="#fff" stroke-width="2.5" stroke-linecap="round"/><path d="M4.5 7.3 L7.4 10.2 L14.8 2.7" fill="none" stroke="#fff" stroke-width="3.3" stroke-linecap="square" stroke-linejoin="miter"/></svg></div>
<div id="f_tree9" class="t16" style="left:130.0px;top:308.6px;letter-spacing:-0.320px;display:inline-block;transform-origin:0 50%;transform:scaleX(0.9687);">HCJP, 6, $5,403.52</div>
<div style="position:absolute;left:110.9px;top:333.7px"><svg width="14.5" height="14.5" viewBox="0 0 16 16" style="display:block;overflow:visible"><path d="M12.4 8.8 V12 A1.9 1.9 0 0 1 10.5 13.9 H3.5 A1.9 1.9 0 0 1 1.6 12 V5 A1.9 1.9 0 0 1 3.5 3.1 H9.8" fill="none" stroke="#fff" stroke-width="2.5" stroke-linecap="round"/><path d="M4.5 7.3 L7.4 10.2 L14.8 2.7" fill="none" stroke="#fff" stroke-width="3.3" stroke-linecap="square" stroke-linejoin="miter"/></svg></div>
<div id="f_tree10" class="t16" style="left:130.0px;top:331.2px;letter-spacing:-0.320px;display:inline-block;transform-origin:0 50%;transform:scaleX(0.9640);">HCYQT, 27, $43,061.46</div>
<div style="position:absolute;left:110.9px;top:357.1px"><svg width="14.5" height="14.5" viewBox="0 0 16 16" style="display:block;overflow:visible"><path d="M12.4 8.8 V12 A1.9 1.9 0 0 1 10.5 13.9 H3.5 A1.9 1.9 0 0 1 1.6 12 V5 A1.9 1.9 0 0 1 3.5 3.1 H9.8" fill="none" stroke="#fff" stroke-width="2.5" stroke-linecap="round"/><path d="M4.5 7.3 L7.4 10.2 L14.8 2.7" fill="none" stroke="#fff" stroke-width="3.3" stroke-linecap="square" stroke-linejoin="miter"/></svg></div>
<div id="f_tree11" class="t16" style="left:130.0px;top:354.6px;letter-spacing:-0.320px;display:inline-block;transform-origin:0 50%;transform:scaleX(0.9553);">HOPE, 5, $2,913.72</div>
<div style="position:absolute;left:110.9px;top:378.7px"><svg width="14.5" height="14.5" viewBox="0 0 16 16" style="display:block;overflow:visible"><path d="M12.4 8.8 V12 A1.9 1.9 0 0 1 10.5 13.9 H3.5 A1.9 1.9 0 0 1 1.6 12 V5 A1.9 1.9 0 0 1 3.5 3.1 H9.8" fill="none" stroke="#fff" stroke-width="2.5" stroke-linecap="round"/><path d="M4.5 7.3 L7.4 10.2 L14.8 2.7" fill="none" stroke="#fff" stroke-width="3.3" stroke-linecap="square" stroke-linejoin="miter"/></svg></div>
<div id="f_tree12" class="t16" style="left:130.0px;top:376.2px;letter-spacing:-0.320px;display:inline-block;transform-origin:0 50%;transform:scaleX(0.9727);">IFNA, 1, $713.60</div>
</div>
<div id="treesb"><div></div></div>
<div id="tbl">
<div class="tr" style="top:6.50px;background:#343a4b">
<div style="position:absolute;left:15.6px;top:2.10px"><svg width="22" height="22" viewBox="0 0 16 16" style="display:block;overflow:visible"><path d="M12.4 8.8 V12 A1.9 1.9 0 0 1 10.5 13.9 H3.5 A1.9 1.9 0 0 1 1.6 12 V5 A1.9 1.9 0 0 1 3.5 3.1 H9.8" fill="none" stroke="#fff" stroke-width="2.1" stroke-linecap="round"/><path d="M4.5 7.3 L7.4 10.2 L14.8 2.7" fill="none" stroke="#fff" stroke-width="2.8" stroke-linecap="square" stroke-linejoin="miter"/></svg></div>
<div class="c lnk" style="left:54.0px;top:4.50px"><span id="f_c0_0" style="letter-spacing:-0.149px;">1048584</span></div>
<div class="c" style="left:155.6px;top:4.50px"><span id="f_c0_1" style="letter-spacing:-0.185px;">1190443</span></div>
<div class="c" style="left:252.4px;top:4.50px"><span id="f_c0_2" style="letter-spacing:-0.320px;display:inline-block;transform-origin:0 50%;transform:scaleX(0.9732);">-10.00</span></div>
<div class="c" style="left:310.4px;top:4.50px"><span id="f_c0_3" style="letter-spacing:-0.320px;display:inline-block;transform-origin:0 50%;transform:scaleX(0.9618);">MCOCgo</span></div>
<div class="c" style="left:387.4px;top:4.50px"><span id="f_c0_4" style="letter-spacing:-0.158px;">341572</span></div>
<div class="c" style="left:580.0px;top:4.50px"><span id="f_c0_5" style="letter-spacing:-0.320px;display:inline-block;transform-origin:0 50%;transform:scaleX(0.9133);">WTECD</span></div>
<div class="c" style="left:648.6px;top:4.50px"><span id="f_c0_6" style="letter-spacing:-0.320px;display:inline-block;transform-origin:0 50%;transform:scaleX(0.9320);">WHITE CEDAR</span></div>
<div class="c" style="left:750.4px;top:4.50px"><span class="ell">...</span></div>
<div class="c" style="left:890.6px;top:4.50px"><span id="f_c0_7" style="letter-spacing:0.320px;display:inline-block;transform-origin:0 50%;transform:scaleX(1.0136);">02/23/20</span></div>
</div>
<div class="tr" style="top:35.35px;background:#464c61">
<div style="position:absolute;left:15.6px;top:2.25px"><svg width="22" height="22" viewBox="0 0 16 16" style="display:block;overflow:visible"><path d="M12.4 8.8 V12 A1.9 1.9 0 0 1 10.5 13.9 H3.5 A1.9 1.9 0 0 1 1.6 12 V5 A1.9 1.9 0 0 1 3.5 3.1 H9.8" fill="none" stroke="#fff" stroke-width="2.1" stroke-linecap="round"/><path d="M4.5 7.3 L7.4 10.2 L14.8 2.7" fill="none" stroke="#fff" stroke-width="2.8" stroke-linecap="square" stroke-linejoin="miter"/></svg></div>
<div class="c lnk" style="left:54.0px;top:4.65px"><span id="f_c1_0" style="letter-spacing:-0.149px;">1048586</span></div>
<div class="c" style="left:155.6px;top:4.65px"><span id="f_c1_1" style="letter-spacing:-0.185px;">1190445</span></div>
<div class="c" style="left:252.4px;top:4.65px"><span id="f_c1_2" style="letter-spacing:-0.320px;display:inline-block;transform-origin:0 50%;transform:scaleX(0.9732);">-10.00</span></div>
<div class="c" style="left:310.4px;top:4.65px"><span id="f_c1_3" style="letter-spacing:-0.320px;display:inline-block;transform-origin:0 50%;transform:scaleX(0.9618);">MCOCgo</span></div>
<div class="c" style="left:387.4px;top:4.65px"><span id="f_c1_4" style="letter-spacing:-0.320px;display:inline-block;transform-origin:0 50%;transform:scaleX(0.9963);">341571</span></div>
<div class="c" style="left:580.0px;top:4.65px"><span id="f_c1_5" style="letter-spacing:-0.320px;display:inline-block;transform-origin:0 50%;transform:scaleX(0.9133);">WTECD</span></div>
<div class="c" style="left:648.6px;top:4.65px"><span id="f_c1_6" style="letter-spacing:-0.320px;display:inline-block;transform-origin:0 50%;transform:scaleX(0.9320);">WHITE CEDAR</span></div>
<div class="c" style="left:750.4px;top:4.65px"><span class="ell">...</span></div>
<div class="c" style="left:890.6px;top:4.65px"><span id="f_c1_7" style="letter-spacing:0.320px;display:inline-block;transform-origin:0 50%;transform:scaleX(1.0136);">02/23/20</span></div>
</div>
<div class="tr" style="top:64.20px;background:#343a4b">
<div style="position:absolute;left:15.6px;top:2.40px"><svg width="22" height="22" viewBox="0 0 16 16" style="display:block;overflow:visible"><path d="M12.4 8.8 V12 A1.9 1.9 0 0 1 10.5 13.9 H3.5 A1.9 1.9 0 0 1 1.6 12 V5 A1.9 1.9 0 0 1 3.5 3.1 H9.8" fill="none" stroke="#fff" stroke-width="2.1" stroke-linecap="round"/><path d="M4.5 7.3 L7.4 10.2 L14.8 2.7" fill="none" stroke="#fff" stroke-width="2.8" stroke-linecap="square" stroke-linejoin="miter"/></svg></div>
<div class="c lnk" style="left:54.0px;top:4.80px"><span id="f_c2_0" style="letter-spacing:-0.216px;">1048587</span></div>
<div class="c" style="left:155.6px;top:4.80px"><span id="f_c2_1" style="letter-spacing:-0.252px;">1190447</span></div>
<div class="c" style="left:252.4px;top:4.80px"><span id="f_c2_2" style="letter-spacing:-0.320px;display:inline-block;transform-origin:0 50%;transform:scaleX(0.9732);">-10.00</span></div>
<div class="c" style="left:310.4px;top:4.80px"><span id="f_c2_3" style="letter-spacing:-0.320px;display:inline-block;transform-origin:0 50%;transform:scaleX(0.9618);">MCOCgo</span></div>
<div class="c" style="left:387.4px;top:4.80px"><span id="f_c2_4" style="letter-spacing:-0.158px;">341570</span></div>
<div class="c" style="left:580.0px;top:4.80px"><span id="f_c2_5" style="letter-spacing:-0.320px;display:inline-block;transform-origin:0 50%;transform:scaleX(0.9133);">WTECD</span></div>
<div class="c" style="left:648.6px;top:4.80px"><span id="f_c2_6" style="letter-spacing:-0.320px;display:inline-block;transform-origin:0 50%;transform:scaleX(0.9320);">WHITE CEDAR</span></div>
<div class="c" style="left:750.4px;top:4.80px"><span class="ell">...</span></div>
<div class="c" style="left:890.6px;top:4.80px"><span id="f_c2_7" style="letter-spacing:0.320px;display:inline-block;transform-origin:0 50%;transform:scaleX(1.0136);">02/23/20</span></div>
</div>
<div class="tr" style="top:93.05px;background:#464c61">
<div style="position:absolute;left:15.6px;top:1.55px"><svg width="22" height="22" viewBox="0 0 16 16" style="display:block;overflow:visible"><path d="M12.4 8.8 V12 A1.9 1.9 0 0 1 10.5 13.9 H3.5 A1.9 1.9 0 0 1 1.6 12 V5 A1.9 1.9 0 0 1 3.5 3.1 H9.8" fill="none" stroke="#fff" stroke-width="2.1" stroke-linecap="round"/><path d="M4.5 7.3 L7.4 10.2 L14.8 2.7" fill="none" stroke="#fff" stroke-width="2.8" stroke-linecap="square" stroke-linejoin="miter"/></svg></div>
<div class="c lnk" style="left:54.0px;top:3.95px"><span id="f_c3_0" style="letter-spacing:-0.149px;">1048588</span></div>
<div class="c" style="left:155.6px;top:3.95px"><span id="f_c3_1" style="letter-spacing:-0.185px;">1190449</span></div>
<div class="c" style="left:252.4px;top:3.95px"><span id="f_c3_2" style="letter-spacing:-0.320px;display:inline-block;transform-origin:0 50%;transform:scaleX(0.9732);">-10.00</span></div>
<div class="c" style="left:310.4px;top:3.95px"><span id="f_c3_3" style="letter-spacing:-0.320px;display:inline-block;transform-origin:0 50%;transform:scaleX(0.9618);">MCOCgo</span></div>
<div class="c" style="left:387.4px;top:3.95px"><span id="f_c3_4" style="letter-spacing:-0.158px;">341568</span></div>
<div class="c" style="left:580.0px;top:3.95px"><span id="f_c3_5" style="letter-spacing:-0.320px;display:inline-block;transform-origin:0 50%;transform:scaleX(0.9133);">WTECD</span></div>
<div class="c" style="left:648.6px;top:3.95px"><span id="f_c3_6" style="letter-spacing:-0.320px;display:inline-block;transform-origin:0 50%;transform:scaleX(0.9320);">WHITE CEDAR</span></div>
<div class="c" style="left:750.4px;top:3.95px"><span class="ell">...</span></div>
<div class="c" style="left:890.6px;top:3.95px"><span id="f_c3_7" style="letter-spacing:0.320px;display:inline-block;transform-origin:0 50%;transform:scaleX(1.0136);">02/23/20</span></div>
</div>
<div class="tr" style="top:121.90px;background:#343a4b">
<div style="position:absolute;left:15.6px;top:2.70px"><svg width="22" height="22" viewBox="0 0 16 16" style="display:block;overflow:visible"><path d="M12.4 8.8 V12 A1.9 1.9 0 0 1 10.5 13.9 H3.5 A1.9 1.9 0 0 1 1.6 12 V5 A1.9 1.9 0 0 1 3.5 3.1 H9.8" fill="none" stroke="#fff" stroke-width="2.1" stroke-linecap="round"/><path d="M4.5 7.3 L7.4 10.2 L14.8 2.7" fill="none" stroke="#fff" stroke-width="2.8" stroke-linecap="square" stroke-linejoin="miter"/></svg></div>
<div class="c lnk" style="left:54.0px;top:5.10px"><span id="f_c4_0" style="letter-spacing:-0.149px;">1048599</span></div>
<div class="c" style="left:155.6px;top:5.10px"><span id="f_c4_1" style="letter-spacing:-0.185px;">1190482</span></div>
<div class="c" style="left:265.0px;top:5.10px"><span id="f_c4_2" style="letter-spacing:-0.320px;display:inline-block;transform-origin:0 50%;transform:scaleX(0.9940);">0.00</span></div>
<div class="c" style="left:310.4px;top:5.10px"><span id="f_c4_3" style="letter-spacing:-0.320px;display:inline-block;transform-origin:0 50%;transform:scaleX(0.9610);">Cgo</span></div>
<div class="c" style="left:388.0px;top:5.10px"><span id="f_c4_4" style="letter-spacing:-0.320px;display:inline-block;transform-origin:0 50%;transform:scaleX(0.9436);">WISK AIR</span></div>
<div class="c" style="left:580.0px;top:5.10px"><span id="f_c4_5" style="letter-spacing:-0.320px;display:inline-block;transform-origin:0 50%;transform:scaleX(0.9347);">WISKA</span></div>
<div class="c" style="left:648.6px;top:5.10px"><span id="f_c4_6" style="letter-spacing:-0.320px;display:inline-block;transform-origin:0 50%;transform:scaleX(0.9523);">WISK AIR</span></div>
<div class="c" style="left:890.6px;top:5.10px"><span id="f_c4_7" style="letter-spacing:0.320px;display:inline-block;transform-origin:0 50%;transform:scaleX(1.0136);">07/21/20</span></div>
</div>
<div class="tr" style="top:150.75px;background:#464c61">
<div style="position:absolute;left:15.6px;top:1.85px"><svg width="22" height="22" viewBox="0 0 16 16" style="display:block;overflow:visible"><path d="M12.4 8.8 V12 A1.9 1.9 0 0 1 10.5 13.9 H3.5 A1.9 1.9 0 0 1 1.6 12 V5 A1.9 1.9 0 0 1 3.5 3.1 H9.8" fill="none" stroke="#fff" stroke-width="2.1" stroke-linecap="round"/><path d="M4.5 7.3 L7.4 10.2 L14.8 2.7" fill="none" stroke="#fff" stroke-width="2.8" stroke-linecap="square" stroke-linejoin="miter"/></svg></div>
<div class="c lnk" style="left:54.0px;top:4.25px"><span id="f_c5_0" style="letter-spacing:-0.149px;">1048740</span></div>
<div class="c" style="left:155.6px;top:4.25px"><span id="f_c5_1" style="letter-spacing:-0.185px;">1190749</span></div>
<div class="c" style="left:265.0px;top:4.25px"><span id="f_c5_2" style="letter-spacing:-0.320px;display:inline-block;transform-origin:0 50%;transform:scaleX(0.9940);">0.00</span></div>
<div class="c" style="left:310.4px;top:4.25px"><span id="f_c5_3" style="letter-spacing:-0.320px;display:inline-block;transform-origin:0 50%;transform:scaleX(0.9610);">Cgo</span></div>
<div class="c" style="left:388.0px;top:4.25px"><span id="f_c5_4" style="letter-spacing:-0.320px;display:inline-block;transform-origin:0 50%;transform:scaleX(0.9388);">TAIT, DESTINY</span></div>
<div class="c" style="left:580.0px;top:4.25px"><span id="f_c5_5" style="letter-spacing:-0.320px;display:inline-block;transform-origin:0 50%;transform:scaleX(0.9174);">NSA</span></div>
<div class="c" style="left:648.6px;top:4.25px"><span id="f_c5_6" style="letter-spacing:-0.320px;display:inline-block;transform-origin:0 50%;transform:scaleX(0.9517);">NORTH STAR AIR</span></div>
<div class="c" style="left:890.6px;top:4.25px"><span id="f_c5_7" style="letter-spacing:0.320px;display:inline-block;transform-origin:0 50%;transform:scaleX(1.0136);">07/22/20</span></div>
</div>
<div class="hdrsliver"></div>
<div style="position:absolute;left:353px;top:0;width:13px;height:1.2px;background:#a9adba;border-radius:0 0 6px 6px"></div>
<div class="vl" style="left:45.6px"></div>
<div class="vl" style="left:147.0px"></div>
<div class="vl" style="left:230.6px"></div>
<div class="vl" style="left:302.4px"></div>
<div class="vl" style="left:379.0px"></div>
<div class="vl" style="left:571.4px"></div>
<div class="vl" style="left:639.6px"></div>
<div class="vl" style="left:795.0px"></div>
<div class="vl" style="left:883.0px"></div>
</div>
<div class="pb" style="left:336.3px;width:34.2px"><svg width="13" height="12" viewBox="0 0 13 12"><path d="M6 1.6 L2.2 6 L6 10.4 M11 1.6 L7.2 6 L11 10.4" fill="none" stroke="#fff" stroke-width="2.4"/></svg></div>
<div class="pb" style="left:377.2px;width:79.8px"><svg width="8" height="12" viewBox="0 0 8 12" style="position:absolute;left:10.6px;top:16.4px"><path d="M6.2 1.4 L2.2 6 L6.2 10.6" fill="none" stroke="#fff" stroke-width="2.4"/></svg><span id="f_back" style="position:absolute;left:23.8px;top:12.4px;line-height:20px;letter-spacing:-0.193px;">BACK</span></div>
<div class="pb" style="left:463.5px;width:34px"><span>1</span></div>
<div class="pb" style="left:504.6px;width:34px"><span>2</span></div>
<div class="pb" style="left:545.4px;width:34px"><span>3</span></div>
<div class="pb" style="left:586.0px;width:34px"><span>4</span></div>
<div class="pb act" style="left:627.2px;width:34px"><span>5</span></div>
<div class="pb" style="left:668.0px;width:34px"><span>6</span></div>
<div class="pb" style="left:708.6px;width:34px"><span>7</span></div>
<div class="pb" style="left:749.5px;width:34px"><span>8</span></div>
<div class="pb" style="left:790.2px;width:34px"><span>9</span></div>
<div class="pb" style="left:831.0px;width:79.4px"><span id="f_next" style="position:absolute;left:12px;top:12.4px;line-height:20px;letter-spacing:-0.057px;">NEXT</span><svg width="8" height="12" viewBox="0 0 8 12" style="position:absolute;left:59.4px;top:16.4px"><path d="M1.8 1.4 L5.8 6 L1.8 10.6" fill="none" stroke="#fff" stroke-width="2.4"/></svg></div>
<div class="pb" style="left:917.0px;width:34.8px"><svg width="13" height="12" viewBox="0 0 13 12"><path d="M2 1.6 L5.8 6 L2 10.4 M7 1.6 L10.8 6 L7 10.4" fill="none" stroke="#fff" stroke-width="2.4"/></svg></div>
<div id="hsb"><div></div></div>
<div id="vsb"><div class="th1"></div><div class="corner"></div></div>
<div class="bigbtn" style="left:44.4px;top:390.3px"><svg width="13" height="13" viewBox="0 0 13 13" style="position:absolute;left:94px;top:16px"><path d="M2.6 2.6 L10.4 10.4 M10.4 2.6 L2.6 10.4" stroke="#fff" stroke-width="3.6" stroke-linecap="round"/></svg><span id="f_cancel" style="position:absolute;left:110.9px;top:12.5px;line-height:20px;letter-spacing:-0.320px;display:inline-block;transform-origin:0 50%;transform:scaleX(0.9272);">CANCEL</span></div>
<div class="bigbtn" style="left:1041.2px;top:390.2px"><svg width="16" height="13" viewBox="0 0 16 13" style="position:absolute;left:87.4px;top:16px"><path d="M2.2 6.4 L6 10 L13.8 2.6" fill="none" stroke="#fff" stroke-width="3.6"/></svg><span id="f_proceed" style="position:absolute;left:107px;top:12.9px;line-height:20px;letter-spacing:-0.320px;display:inline-block;transform-origin:0 50%;transform:scaleX(0.9015);">PROCEED</span></div>
<div id="f_build" class="t16" style="left:44.5px;top:441.0px;letter-spacing:-0.166px;color:#eceef1">Build 10.1.9561.23243 (Development), on 3/6/2026 12:55:03 PM</div>
<div id="footerband"></div>
<div id="pagesb"><div></div></div>
<div id="ring"></div>
<svg id="cursor" width="14" height="20" viewBox="0 0 14 20"><path d="M1 1 V15.5 L4.4 12.4 L7 18.4 L9.4 17.3 L6.8 11.5 L11.4 11.3 Z" fill="#fff" stroke="#222" stroke-width="1"/></svg>
</div>
<div id="dt">
<div id="dtabs">
<svg style="position:absolute;left:8px;top:6.5px" width="15" height="15" viewBox="0 0 15 15"><path d="M0.8 0.8 H14.2 V5.6 M0.8 0.8 V14.2 H5.6" fill="none" stroke="#cfc8d8" stroke-width="1.5" stroke-dasharray="1.7 1.5"/><path d="M13.6 13.6 L6.6 6.6 M6.4 11.6 V6.4 H11.6" fill="none" stroke="#cfc8d8" stroke-width="1.7"/></svg>
<svg style="position:absolute;left:35px;top:6px" width="17" height="15" viewBox="0 0 17 15"><path d="M3 11 V2.5 H14.5" fill="none" stroke="#cfc8d8" stroke-width="1.4"/><path d="M0.6 12.2 H8" stroke="#cfc8d8" stroke-width="1.6"/><rect x="10.2" y="5" width="5.4" height="8.2" rx="0.8" fill="none" stroke="#cfc8d8" stroke-width="1.4"/></svg>
<div class="dsep" style="left:62px;top:6px"></div>
<div class="dtab" style="left:74.3px"><span id="f_dt0" style="letter-spacing:-0.259px;">Elements</span></div>
<div class="dtab" style="left:143.6px"><span id="f_dt1" style="letter-spacing:-0.120px;">Console</span></div>
<div class="dtab" style="left:207.5px"><span id="f_dt2" style="letter-spacing:-0.320px;display:inline-block;transform-origin:0 50%;transform:scaleX(0.9930);">Sources</span></div>
<div class="dtab on" style="left:271px"><span id="f_dt3" style="letter-spacing:0.299px;">Network</span></div>
<div class="dtab" style="left:337.5px"><span id="f_dt4" style="letter-spacing:-0.078px;">Performance</span></div>
<div class="dtab" style="left:427.5px"><span id="f_dt5" style="letter-spacing:0.320px;display:inline-block;transform-origin:0 50%;transform:scaleX(1.0084);">Memory</span></div>
<div class="dtab" style="left:494px"><span id="f_dt6" style="letter-spacing:0.287px;">Application</span></div>
<div class="dtab" style="left:577.5px"><span id="f_dt7" style="letter-spacing:-0.082px;">Privacy and security</span></div>
<div class="dtab" style="left:715px"><span id="f_dt8" style="letter-spacing:0.040px;">Lighthouse</span></div>
<div class="dtab" style="left:796px"><span id="f_dt9" style="letter-spacing:-0.161px;">Recorder</span></div>
<div class="dtab" style="left:875px"><span id="f_dt10" style="letter-spacing:0.047px;">AdBlock</span></div>
<div class="dtab" style="left:940px"><span id="f_dt11" style="letter-spacing:-0.191px;">Web Scraper</span></div>
<div id="netul"></div>
<svg style="position:absolute;left:1525px;top:7px" width="11" height="11" viewBox="0 0 11 11"><circle cx="5.5" cy="5.5" r="5" fill="#e5453d"/><path d="M3.4 3.4 L7.6 7.6 M7.6 3.4 L3.4 7.6" stroke="#3a2f40" stroke-width="1.3"/></svg>
<div class="dcnt" style="left:1538px">5</div>
<svg style="position:absolute;left:1553px;top:8px" width="11" height="10" viewBox="0 0 11 10"><path d="M0.5 0.5 H10.5 V7.5 H3.5 L0.5 9.8 Z" fill="#e5453d"/><rect x="4.8" y="2" width="1.4" height="2.6" fill="#3a2f40"/><rect x="4.8" y="5.2" width="1.4" height="1.2" fill="#3a2f40"/></svg>
<div class="dcnt" style="left:1566px">1</div>
<div class="dsep" style="left:1580px;top:6px"></div>
<div style="position:absolute;left:1590px;top:2px;width:22px;height:22px;border-radius:50%;background:#2d72d6;box-shadow:inset 0 0 0 1.5px #2458b8"><svg width="22" height="22" viewBox="0 0 22 22"><path d="M7 6 H14 A1.5 1.5 0 0 1 15.5 7.5 V12 A1.5 1.5 0 0 1 14 13.5 H10 L7.5 16 V13.5 H7 A1.5 1.5 0 0 1 5.5 12 V7.5 A1.5 1.5 0 0 1 7 6 Z" fill="none" stroke="#d8e8ff" stroke-width="1.4"/><path d="M16 4 L16.7 5.8 L18.5 6.5 L16.7 7.2 L16 9 L15.3 7.2 L13.5 6.5 L15.3 5.8 Z" fill="#fff"/></svg></div>
<svg style="position:absolute;left:1619px;top:5px" width="17" height="17" viewBox="0 0 17 17"><path d="M7.2 1.2 H9.8 L10.2 3.2 L11.6 4 L13.5 3.3 L14.8 5.5 L13.3 6.9 V8.5 V10.1 L14.8 11.5 L13.5 13.7 L11.6 13 L10.2 13.8 L9.8 15.8 H7.2 L6.8 13.8 L5.4 13 L3.5 13.7 L2.2 11.5 L3.7 10.1 V6.9 L2.2 5.5 L3.5 3.3 L5.4 4 L6.8 3.2 Z" fill="none" stroke="#d6d0dd" stroke-width="1.3" stroke-linejoin="round"/><circle cx="8.5" cy="8.5" r="2.3" fill="none" stroke="#d6d0dd" stroke-width="1.3"/></svg>
<svg style="position:absolute;left:1652px;top:6px" width="4" height="14" viewBox="0 0 4 14"><circle cx="2" cy="2" r="1.3" fill="#d6d0dd"/><circle cx="2" cy="7" r="1.3" fill="#d6d0dd"/><circle cx="2" cy="12" r="1.3" fill="#d6d0dd"/></svg>
<svg style="position:absolute;left:1676px;top:7px" width="12" height="12" viewBox="0 0 12 12"><path d="M1.2 1.2 L10.8 10.8 M10.8 1.2 L1.2 10.8" stroke="#d6d0dd" stroke-width="1.4"/></svg>
</div>
<div id="dbar">
<svg style="position:absolute;left:7px;top:5px" width="16" height="16" viewBox="0 0 16 16"><circle cx="8" cy="8" r="6.6" fill="none" stroke="#e5453d" stroke-width="1.5"/><rect x="4.8" y="4.8" width="6.4" height="6.4" rx="1.6" fill="#e5453d"/></svg>
<svg style="position:absolute;left:35px;top:5px" width="16" height="16" viewBox="0 0 16 16"><circle cx="8" cy="8" r="6.4" fill="none" stroke="#d6d0dd" stroke-width="1.4"/><path d="M3.6 12.4 L12.4 3.6" stroke="#d6d0dd" stroke-width="1.4"/></svg>
<div class="dsep" style="left:62px;top:5px"></div>
<svg style="position:absolute;left:73px;top:6px" width="14" height="14" viewBox="0 0 14 14"><path d="M0.8 1 H13.2 L8.4 7.2 V12.6 L5.6 11 V7.2 Z" fill="#b79cf0"/></svg>
<svg style="position:absolute;left:100px;top:5px" width="16" height="16" viewBox="0 0 16 16"><circle cx="6.4" cy="6.4" r="4.2" fill="none" stroke="#d6d0dd" stroke-width="1.5"/><path d="M9.6 9.6 L14 14" stroke="#d6d0dd" stroke-width="1.6"/></svg>
<div class="dsep" style="left:126px;top:5px"></div>
<svg style="position:absolute;left:136px;top:7px" width="13" height="13" viewBox="0 0 13 13"><rect x="0" y="0" width="13" height="13" rx="2" fill="#b79cf0"/><path d="M3 6.6 L5.4 9 L10 3.8" fill="none" stroke="#2b2233" stroke-width="1.7"/></svg>
<div class="dlbl" style="left:155px"><span id="f_pres" style="letter-spacing:-0.311px;">Preserve log</span></div>
<div class="dsep" style="left:229px;top:5px"></div>
<svg style="position:absolute;left:239px;top:7px" width="13" height="13" viewBox="0 0 13 13"><rect x="0" y="0" width="13" height="13" rx="2" fill="#b79cf0"/><path d="M3 6.6 L5.4 9 L10 3.8" fill="none" stroke="#2b2233" stroke-width="1.7"/></svg>
<div class="dlbl" style="left:257.5px"><span id="f_dis" style="letter-spacing:-0.320px;display:inline-block;transform-origin:0 50%;transform:scaleX(0.9969);">Disable cache</span></div>
<div id="thr"><span style="letter-spacing:0.2px">No throttling</span><svg style="position:absolute;left:96px;top:9px" width="8" height="6" viewBox="0 0 8 6"><path d="M0.5 1 H7.5 L4 5 Z" fill="#bdb6c6"/></svg></div>
<svg style="position:absolute;left:452px;top:5px" width="19" height="16" viewBox="0 0 19 16"><path d="M1 5.6 A11 11 0 0 1 17 5.6 M3.6 8.6 A7.4 7.4 0 0 1 12.4 7.4 M6.2 11.4 A3.6 3.6 0 0 1 9.6 10.4" fill="none" stroke="#d6d0dd" stroke-width="1.4"/><circle cx="14" cy="12" r="2.4" fill="none" stroke="#d6d0dd" stroke-width="1.4"/><circle cx="14" cy="12" r="0.6" fill="#d6d0dd"/></svg>
<div class="dsep" style="left:479px;top:5px"></div>
<svg style="position:absolute;left:491.4px;top:5px" width="12.4" height="15" viewBox="0 0 14 15" preserveAspectRatio="none"><path d="M7 10 V1.6 M3.6 4.8 L7 1.4 L10.4 4.8 M1.2 9.6 V13.4 H12.8 V9.6" fill="none" stroke="#d6d0dd" stroke-width="1.4"/></svg>
<svg style="position:absolute;left:519.5px;top:5px" width="12.4" height="15" viewBox="0 0 14 15" preserveAspectRatio="none"><path d="M7 1.2 V9.6 M3.6 6.4 L7 9.8 L10.4 6.4 M1.2 9.6 V13.4 H12.8 V9.6" fill="none" stroke="#d6d0dd" stroke-width="1.4"/></svg>
<svg style="position:absolute;left:1674px;top:5px" width="17" height="17" viewBox="0 0 17 17"><path d="M7.2 1.2 H9.8 L10.2 3.2 L11.6 4 L13.5 3.3 L14.8 5.5 L13.3 6.9 V8.5 V10.1 L14.8 11.5 L13.5 13.7 L11.6 13 L10.2 13.8 L9.8 15.8 H7.2 L6.8 13.8 L5.4 13 L3.5 13.7 L2.2 11.5 L3.7 10.1 V6.9 L2.2 5.5 L3.5 3.3 L5.4 4 L6.8 3.2 Z" fill="none" stroke="#d6d0dd" stroke-width="1.3" stroke-linejoin="round"/><circle cx="8.5" cy="8.5" r="2.3" fill="none" stroke="#d6d0dd" stroke-width="1.3"/></svg>
<div class="dsep" style="left:1661px;top:5px"></div>
</div>
<div id="dfil">
<div id="fbox"><svg style="position:absolute;left:9px;top:6px" width="11" height="11" viewBox="0 0 11 11"><path d="M0.8 1 H10.2 L6.6 5.6 V9.8 L4.4 8.6 V5.6 Z" fill="none" stroke="#d6d0dd" stroke-width="1.2" stroke-linejoin="round"/></svg><span>Filter</span></div>
<div style="position:absolute;left:677px;top:7px;width:11px;height:11px;border:1px solid #8d8794;border-radius:2px;background:#2c2830;box-sizing:content-box"></div>
<div class="dlbl" style="left:695px;top:6px">Invert</div>
<div class="dsep" style="left:737px;top:5px"></div>
<div class="dlbl" style="left:756px;top:6px"><span id="f_mf" style="letter-spacing:-0.026px;">More filters</span></div>
<svg style="position:absolute;left:823.5px;top:10.5px" width="8" height="6" viewBox="0 0 8 6"><path d="M0.5 0.5 H7.5 L4 5.5 Z" fill="#d6d0dd"/></svg>
<div class="dsep" style="left:877px;top:5px;height:17px"></div>
<div class="pill on" style="left:850px;width:22.5px"></div><div class="pilt" style="left:854px"><span id="f_pl0" style="letter-spacing:-0.320px;display:inline-block;transform-origin:0 50%;transform:scaleX(0.9181);">All</span></div>
<div class="pill" style="left:882.5px;width:64px"></div><div class="pilt" style="left:888.5px"><span id="f_pl1" style="letter-spacing:-0.320px;display:inline-block;transform-origin:0 50%;transform:scaleX(0.9118);">Fetch/XHR</span></div>
<div class="pill" style="left:951.5px;width:31px"></div><div class="pilt" style="left:957.5px"><span id="f_pl2" style="letter-spacing:-0.320px;display:inline-block;transform-origin:0 50%;transform:scaleX(0.8624);">Doc</span></div>
<div class="pill" style="left:986.5px;width:31px"></div><div class="pilt" style="left:993px"><span id="f_pl3" style="letter-spacing:-0.320px;display:inline-block;transform-origin:0 50%;transform:scaleX(0.7693);">CSS</span></div>
<div class="pill" style="left:1021.5px;width:22px"></div><div class="pilt" style="left:1027.5px"><span id="f_pl4" style="letter-spacing:-0.320px;display:inline-block;transform-origin:0 50%;transform:scaleX(0.7308);">JS</span></div>
<div class="pill" style="left:1048px;width:33.5px"></div><div class="pilt" style="left:1054px"><span id="f_pl5" style="letter-spacing:-0.320px;display:inline-block;transform-origin:0 50%;transform:scaleX(0.8786);">Font</span></div>
<div class="pill" style="left:1086px;width:32px"></div><div class="pilt" style="left:1092.5px"><span id="f_pl6" style="letter-spacing:-0.320px;display:inline-block;transform-origin:0 50%;transform:scaleX(0.9177);">Img</span></div>
<div class="pill" style="left:1122px;width:43px"></div><div class="pilt" style="left:1128.5px"><span id="f_pl7" style="letter-spacing:-0.320px;display:inline-block;transform-origin:0 50%;transform:scaleX(0.9317);">Media</span></div>
<div class="pill" style="left:1169px;width:55px"></div><div class="pilt" style="left:1175.5px"><span id="f_pl8" style="letter-spacing:-0.320px;display:inline-block;transform-origin:0 50%;transform:scaleX(0.9258);">Manifest</span></div>
<div class="pill" style="left:1228.5px;width:45.5px"></div><div class="pilt" style="left:1234.5px"><span id="f_pl9" style="letter-spacing:-0.320px;display:inline-block;transform-origin:0 50%;transform:scaleX(0.8740);">Socket</span></div>
<div class="pill" style="left:1277.5px;width:41.5px"></div><div class="pilt" style="left:1284px"><span id="f_pl10" style="letter-spacing:-0.320px;display:inline-block;transform-origin:0 50%;transform:scaleX(0.8838);">Wasm</span></div>
<div class="pill" style="left:1324px;width:41px"></div><div class="pilt" style="left:1330px"><span id="f_pl11" style="letter-spacing:-0.320px;display:inline-block;transform-origin:0 50%;transform:scaleX(0.9273);">Other</span></div>
</div>
<div id="ghead">
<div class="gh" style="left:4px">Name</div>
<div class="gh" style="left:628px">Status</div>
<div class="gh" style="left:964px">Type</div>
<div class="gh" style="left:1152px">Initiator</div>
<div class="gh" style="left:1465px">Size</div>
<div class="gh" style="left:1582px">Time</div>
</div>
<div class="gr" style="top:106px;background:#201d23">
<div style="position:absolute;left:5px;top:4px"><svg width="13" height="13" viewBox="0 0 12 12"><path d="M2 1.5 H7.5 L10 4 V10.5 H2 Z" fill="none" stroke="#d6d3da" stroke-width="1.2" stroke-linejoin="round"/><path d="M7.2 1.6 V4.3 H10" fill="none" stroke="#d6d3da" stroke-width="1"/></svg></div>
<div class="gc" style="left:22px"><span id="f_nm0" style="letter-spacing:-0.297px;">GetDiscrepanciesAmount?_=1772830810636</span></div>
<div class="gc" style="left:628px">200</div>
<div class="gc" style="left:964px">xhr</div>
<div class="gc u" style="left:1152px">jquery-3.7.1.min.js:2</div>
<div class="gc rt" style="left:1473px;width:100px">2.8 kB</div>
<div class="gc rt" style="left:1582px;width:100px">4.00 s</div>
</div>
<div class="gr" style="top:127px;background:#29252c">
<div style="position:absolute;left:5px;top:4px"><svg width="13" height="13" viewBox="0 0 12 12"><path d="M2 1.5 H7.5 L10 4 V10.5 H2 Z" fill="none" stroke="#d6d3da" stroke-width="1.2" stroke-linejoin="round"/><path d="M7.2 1.6 V4.3 H10" fill="none" stroke="#d6d3da" stroke-width="1"/></svg></div>
<div class="gc" style="left:22px"><span id="f_nm1" style="letter-spacing:-0.297px;">GetDiscrepanciesAmount?_=1772830810637</span></div>
<div class="gc" style="left:628px">200</div>
<div class="gc" style="left:964px">xhr</div>
<div class="gc u" style="left:1152px">jquery-3.7.1.min.js:2</div>
<div class="gc rt" style="left:1473px;width:100px">2.8 kB</div>
<div class="gc rt" style="left:1582px;width:100px">4.02 s</div>
</div>
<div class="gr" style="top:148px;background:#201d23">
<div style="position:absolute;left:4px;top:4px"><svg width="13" height="12" viewBox="0 0 13 12"><path d="M4 1.2 C2.4 1.2 3.4 5 1.2 6 C3.4 7 2.4 10.8 4 10.8 M9 1.2 C10.6 1.2 9.6 5 11.8 6 C9.6 7 10.6 10.8 9 10.8" fill="none" stroke="#e8893a" stroke-width="1.3"/><circle cx="6.5" cy="4.2" r="0.9" fill="#e8893a"/><circle cx="6.5" cy="7.8" r="0.9" fill="#e8893a"/></svg></div>
<div class="gc" style="left:22px"><span id="f_nm2" style="letter-spacing:-0.320px;display:inline-block;transform-origin:0 50%;transform:scaleX(0.9857);">IsSessionStillAlive?_=1772830810638</span></div>
<div class="gc" style="left:628px">200</div>
<div class="gc" style="left:964px">xhr</div>
<div class="gc u" style="left:1152px">jquery-3.7.1.min.js:2</div>
<div class="gc rt" style="left:1473px;width:100px">2.7 kB</div>
<div class="gc rt" style="left:1582px;width:100px">3.54 s</div>
</div>
<div class="gr" style="top:169px;background:#29252c">
<div style="position:absolute;left:4px;top:4px"><svg width="13" height="12" viewBox="0 0 13 12"><path d="M4 1.2 C2.4 1.2 3.4 5 1.2 6 C3.4 7 2.4 10.8 4 10.8 M9 1.2 C10.6 1.2 9.6 5 11.8 6 C9.6 7 10.6 10.8 9 10.8" fill="none" stroke="#e8893a" stroke-width="1.3"/><circle cx="6.5" cy="4.2" r="0.9" fill="#e8893a"/><circle cx="6.5" cy="7.8" r="0.9" fill="#e8893a"/></svg></div>
<div class="gc" style="left:22px"><span id="f_nm3" style="letter-spacing:-0.320px;display:inline-block;transform-origin:0 50%;transform:scaleX(0.9942);">GetRemainingSeconds?__do_not_renew=True&amp;_=1772830810639</span></div>
<div class="gc" style="left:628px">200</div>
<div class="gc" style="left:964px">xhr</div>
<div class="gc u" style="left:1152px">jquery-3.7.1.min.js:2</div>
<div class="gc rt" style="left:1473px;width:100px">2.8 kB</div>
<div class="gc rt" style="left:1582px;width:100px">3.33 s</div>
</div>
<div class="gr" style="top:190px;background:#201d23">
<div style="position:absolute;left:4px;top:4px"><svg width="13" height="12" viewBox="0 0 13 12"><path d="M4 1.2 C2.4 1.2 3.4 5 1.2 6 C3.4 7 2.4 10.8 4 10.8 M9 1.2 C10.6 1.2 9.6 5 11.8 6 C9.6 7 10.6 10.8 9 10.8" fill="none" stroke="#e8893a" stroke-width="1.3"/><circle cx="6.5" cy="4.2" r="0.9" fill="#e8893a"/><circle cx="6.5" cy="7.8" r="0.9" fill="#e8893a"/></svg></div>
<div class="gc" style="left:22px"><span id="f_nm4" style="letter-spacing:-0.320px;display:inline-block;transform-origin:0 50%;transform:scaleX(0.9857);">IsSessionStillAlive?_=1772830810640</span></div>
<div class="gc" style="left:628px">200</div>
<div class="gc" style="left:964px">xhr</div>
<div class="gc u" style="left:1152px">jquery-3.7.1.min.js:2</div>
<div class="gc rt" style="left:1473px;width:100px">2.7 kB</div>
<div class="gc rt" style="left:1582px;width:100px">3.07 s</div>
</div>
<div class="gr" style="top:211px;background:#29252c">
<div style="position:absolute;left:4px;top:4px"><svg width="13" height="12" viewBox="0 0 13 12"><path d="M4 1.2 C2.4 1.2 3.4 5 1.2 6 C3.4 7 2.4 10.8 4 10.8 M9 1.2 C10.6 1.2 9.6 5 11.8 6 C9.6 7 10.6 10.8 9 10.8" fill="none" stroke="#e8893a" stroke-width="1.3"/><circle cx="6.5" cy="4.2" r="0.9" fill="#e8893a"/><circle cx="6.5" cy="7.8" r="0.9" fill="#e8893a"/></svg></div>
<div class="gc" style="left:22px"><span id="f_nm5" style="letter-spacing:-0.320px;display:inline-block;transform-origin:0 50%;transform:scaleX(0.9770);">SetTransactionsOutstanding</span></div>
<div class="gc" style="left:628px">200</div>
<div class="gc" style="left:964px">xhr</div>
<div class="gc u" style="left:1152px">jquery-3.7.1.min.js:2</div>
<div class="gc rt" style="left:1473px;width:100px">2.8 kB</div>
<div class="gc rt" style="left:1582px;width:100px">3.76 s</div>
</div>
<div class="gr" style="top:232px;background:#201d23">
<div style="position:absolute;left:5px;top:4px"><svg width="13" height="13" viewBox="0 0 12 12"><path d="M2 1.5 H7.5 L10 4 V10.5 H2 Z" fill="none" stroke="#d6d3da" stroke-width="1.2" stroke-linejoin="round"/><path d="M7.2 1.6 V4.3 H10" fill="none" stroke="#d6d3da" stroke-width="1"/></svg></div>
<div class="gc" style="left:22px"><span id="f_nm6" style="letter-spacing:-0.320px;display:inline-block;transform-origin:0 50%;transform:scaleX(0.9994);">GetDiscrepanciesAmount?_=1772830810641</span></div>
<div class="gc" style="left:628px">200</div>
<div class="gc" style="left:964px">xhr</div>
<div class="gc u" style="left:1152px">jquery-3.7.1.min.js:2</div>
<div class="gc rt" style="left:1473px;width:100px">2.8 kB</div>
<div class="gc rt" style="left:1582px;width:100px">268 ms</div>
</div>
<div class="gr" style="top:253px;background:#29252c">
<div style="position:absolute;left:5px;top:4px"><svg width="13" height="13" viewBox="0 0 12 12"><path d="M2 1.5 H7.5 L10 4 V10.5 H2 Z" fill="none" stroke="#d6d3da" stroke-width="1.2" stroke-linejoin="round"/><path d="M7.2 1.6 V4.3 H10" fill="none" stroke="#d6d3da" stroke-width="1"/></svg></div>
<div class="gc" style="left:22px"><span id="f_nm7" style="letter-spacing:-0.254px;">GetDetailedView</span></div>
<div class="gc" style="left:628px">200</div>
<div class="gc" style="left:964px">xhr</div>
<div class="gc u" style="left:1152px">jquery-3.7.1.min.js:2</div>
<div class="gc rt" style="left:1473px;width:100px">21.4 kB</div>
<div class="gc rt" style="left:1582px;width:100px">336 ms</div>
</div>
<div class="gvl" style="left:623px"></div>
<div class="gvl" style="left:960px"></div>
<div class="gvl" style="left:1147px"></div>
<div class="gvl" style="left:1460px"></div>
<div class="gvl" style="left:1577px"></div>
<div id="dsb"><svg style="position:absolute;left:2px;top:4px" width="10" height="7" viewBox="0 0 10 7"><path d="M0.5 6.5 L5 0.8 L9.5 6.5 Z" fill="#9a949f"/></svg><div class="t"></div><svg style="position:absolute;left:2px;top:184px" width="10" height="7" viewBox="0 0 10 7"><path d="M0.5 0.5 L5 6.2 L9.5 0.5 Z" fill="#9a949f"/></svg></div>
<div id="dstat"><div class="dlbl" style="left:9px;top:5px;letter-spacing:-0.2px">208 requests</div><div class="dsep" style="left:85px;top:5px"></div><div class="dlbl" style="left:95px;top:5px;letter-spacing:-0.18px">675 kB transferred</div><div class="dsep" style="left:200px;top:5px"></div><div class="dlbl" style="left:211px;top:5px;letter-spacing:-0.35px">868 kB resources</div></div>
<div id="rec"><div class="pill2"></div><div class="pz"><i></i><i></i></div><span>1:20</span></div>
</div>
</body></html>
